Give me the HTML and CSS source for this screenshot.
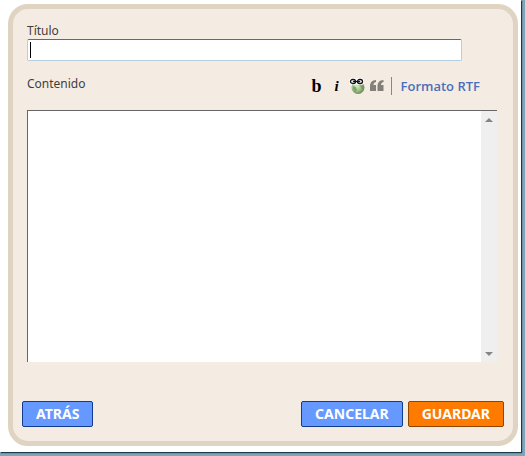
FILE: index.html
```html
<!DOCTYPE html>
<html lang="es">

<head>
    <meta charset="UTF-8">
    <meta name="viewport" content="width=device-width, initial-scale=1.0">
    <title>Título y contenido</title>
    <link rel="stylesheet" href="styles.css">
</head>
<body>
    <main class="page">
        <form class="panel">
            <div class="fields">
                <label for="title">Título</label>
                <div class="title-box">
                    <input type="text" id="title">
                    <span class="caret"></span>
                </div>
                <div class="bar">
                    <label for="content">Contenido</label>
                    <div class="tools">
                        <button type="button" class="tool bold" aria-label="Negrita">b</button>
                        <button type="button" class="tool italic" aria-label="Cursiva">i</button>
                        <button type="button" class="tool" aria-label="Enlace">
                            <svg width="16" height="16" viewBox="0 0 16 16">
                                <defs>
                                    <radialGradient id="globe" cx=".4" cy=".4" r=".65">
                                        <stop offset="0" stop-color="#d8edc8"/>
                                        <stop offset=".55" stop-color="#9fc28a"/>
                                        <stop offset="1" stop-color="#648256"/>
                                    </radialGradient>
                                </defs>
                                <circle cx="9" cy="9.500" r="6.500" fill="url(#globe)"/>
                                <path d="M4 8l3 1 1 3-2 2-2-3zM11 7l4 1-1 4-2-2z" fill="#6b9655" opacity=".7"/>
                                <g fill="none" stroke="#fff" stroke-width="3">
                                    <rect x="1.500" y="1.500" width="5.500" height="4" rx="2"/>
                                    <rect x="8" y="1.500" width="5.500" height="4" rx="2"/>
                                </g>
                                <g fill="none" stroke="#111" stroke-width="1.300">
                                    <rect x="1.500" y="1.500" width="5" height="4" rx="2"/>
                                    <rect x="8.500" y="1.500" width="5" height="4" rx="2"/>
                                    <path d="M4 3.500h7"/>
                                </g>
                            </svg>
                        </button>
                        <button type="button" class="tool" aria-label="Cita">
                            <svg width="14" height="12" viewBox="0 0 14 12" fill="#828079">
                                <path d="M6 0v2C4.300 2.400 3.500 3.500 3.500 5H6v6H0V6C0 2.500 2 .3 6 0z"/>
                                <path d="M13.500 0v2C11.800 2.400 11 3.500 11 5h2.500v6h-6V6c0-3.500 2-5.700 6-6z"/>
                            </svg>
                        </button>
                        <a class="format" href="#">Formato RTF</a>
                    </div>
                </div>
                <div class="editor">
                    <textarea id="content"></textarea>
                    <div class="scroll" aria-hidden="true">
                        <svg width="8" height="4" viewBox="0 0 8 4"><path d="M0 4l4-4 4 4z" fill="#858585"/></svg>
                        <svg width="8" height="4" viewBox="0 0 8 4"><path d="M0 0l4 4 4-4z" fill="#858585"/></svg>
                    </div>
                </div>
            </div>
            <div class="actions">
                <button type="button" class="btn back">Atrás</button>
                <button type="button" class="btn">Cancelar</button>
                <button type="submit" class="btn save">Guardar</button>
            </div>
        </form>
    </main>
</body>

</html>
```
FILE: styles.css
```css
*, *:before, *:after {box-sizing: border-box;}
* {margin: 0;padding: 0;outline: none;}
html {background: #7fa5b9;}
body {padding: 0 4px 4px 0;color: #443c3a;font: 12px/16px "Noto Sans", sans-serif;}
.page {padding: 4px 3px 6px 8px;background: #fff;box-shadow: 1px 1px 1px #1d3a48;}
.panel {padding: 12px 9px 14px;background: #f4ece3;border: 5px solid #dfd3c1;border-radius: 20px;}
.fields {display: flex;flex-direction: column;padding: 2px 7px 0 5px;}
label {align-self: flex-start;}
.title-box {position: relative;margin-right: 35px;}
.title-box input {display: block;width: 100%;height: 22px;padding: 0 4px;font: inherit;background: #fff;border: 1px solid #b5cfe0;border-top-color: #45738a;border-radius: 2px;}
.caret {position: absolute;top: 3px;left: 3px;width: 1px;height: 16px;background: #000;}
.bar {display: flex;justify-content: space-between;height: 49px;padding: 15px 17px 0 0;}
.tools {display: flex;align-items: center;height: 20px;}
.tool {display: flex;align-items: center;justify-content: center;width: 20px;height: 20px;background: none;border: none;color: #000;cursor: pointer;}
.bold {font: bold 18px/20px "Liberation Serif", serif;}
.italic {font: italic bold 15px/20px "Liberation Serif", serif;}
.format {margin-left: 4px;padding-left: 9px;border-left: 1px solid #8c8680;color: #4a6fbb;font: 600 13px/18px "Open Sans", sans-serif;text-decoration: none;}
.editor {display: flex;height: 252px;background: #fff;border-top: 1px solid #666;border-left: 1px solid #666;}
.editor textarea {flex: 1;min-width: 0;padding: 4px;font: inherit;border: none;resize: none;}
.scroll {display: flex;flex-direction: column;justify-content: space-between;align-items: center;width: 16px;padding: 7px 0 6px;background: #f0eff0;}
.actions {display: flex;gap: 5px;margin-top: 39px;}
.btn {height: 26px;padding: 0 13px;background: #6699ff;border: 1px solid #123c8c;border-radius: 2px;color: #fff;font: bold 14px/24px "Noto Sans", sans-serif;text-transform: uppercase;cursor: pointer;}
.back {margin-right: auto;}
.save {background: #ff7b00;border-color: #8f4400;}
```
